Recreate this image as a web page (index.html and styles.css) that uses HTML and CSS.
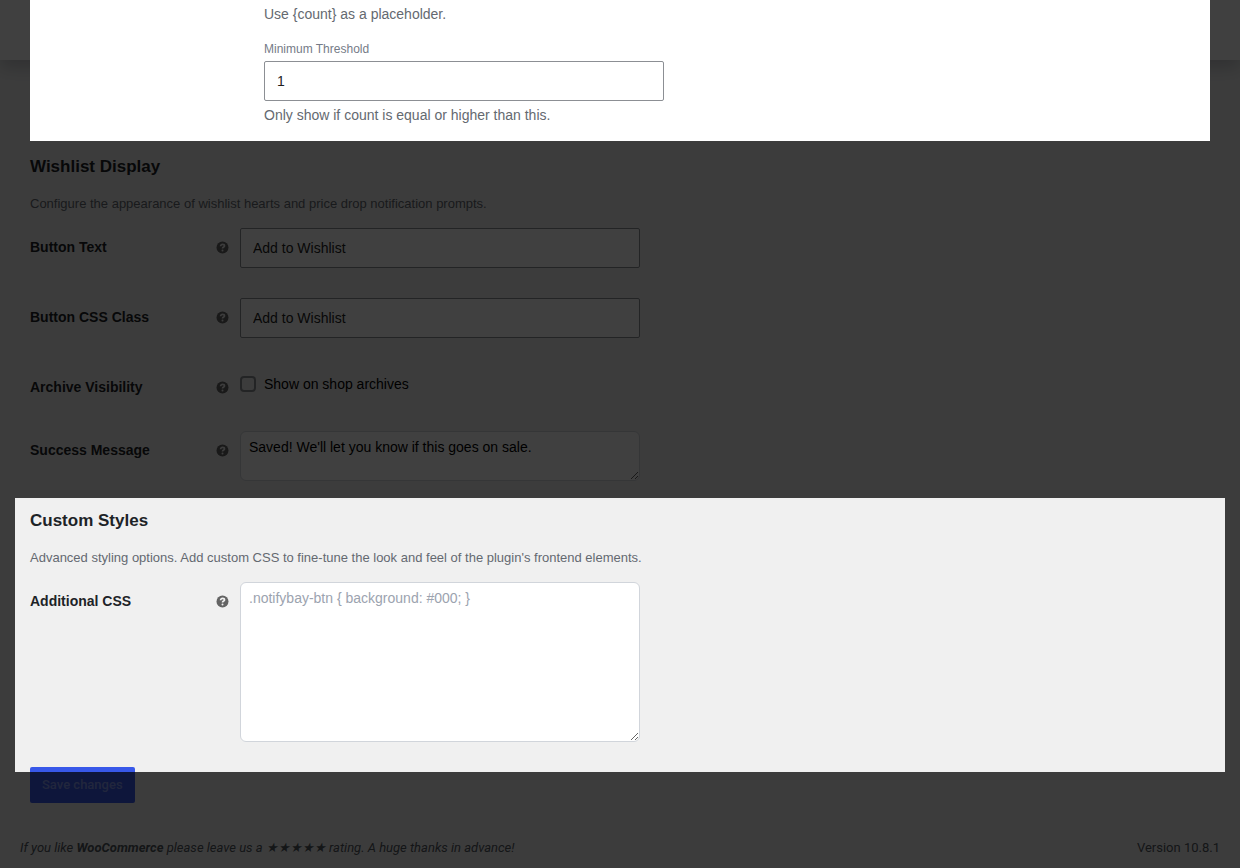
FILE: index.html
```html
<!DOCTYPE html>
<html lang="en">
  <head>
    <meta charset="UTF-8" />
    <meta name="viewport" content="width=device-width, initial-scale=1.0" />
    <title>Settings</title>
    <link rel="stylesheet" href="styles.css">
  </head>
  <body>
    <!-- Help icon, reused in each row -->
    <svg class="symbols" aria-hidden="true">
      <symbol id="help" viewBox="0 0 13 13">
        <circle cx="6.5" cy="6.5" r="6" fill="currentColor" />
        <path class="mark" d="M4.6 5.2C4.6 3.9 5.5 3.4 6.5 3.4S8.5 3.9 8.5 4.9C8.5 6.2 6.5 6 6.5 7.6" />
        <circle class="dot" cx="6.5" cy="9.5" r="1" />
      </symbol>
    </svg>

    <!-- Top bar -->
    <header class="topbar"></header>

    <form class="settings">
      <!-- Highlighted panel -->
      <div class="panel">
        <p>Use {count} as a placeholder.</p>
        <label for="threshold">Minimum Threshold</label>
        <input class="text-input" type="number" id="threshold" value="1">
        <p class="hint">Only show if count is equal or higher than this.</p>
      </div>

      <!-- Wishlist display -->
      <section class="section">
        <h2>Wishlist Display</h2>
        <p class="description">Configure the appearance of wishlist hearts and price drop notification prompts.</p>
        <div class="row">
          <div class="row-label">
            <label for="button-text">Button Text</label>
            <svg class="help"><use href="#help" /></svg>
          </div>
          <div class="row-field">
            <input class="text-input" type="text" id="button-text" value="Add to Wishlist">
          </div>
        </div>
        <div class="row">
          <div class="row-label">
            <label for="button-class">Button CSS Class</label>
            <svg class="help"><use href="#help" /></svg>
          </div>
          <div class="row-field">
            <input class="text-input" type="text" id="button-class" value="Add to Wishlist">
          </div>
        </div>
        <div class="row">
          <div class="row-label">
            <span>Archive Visibility</span>
            <svg class="help"><use href="#help" /></svg>
          </div>
          <div class="row-field">
            <label class="check"><input type="checkbox" id="archives">Show on shop archives</label>
          </div>
        </div>
        <div class="row">
          <div class="row-label">
            <label for="success">Success Message</label>
            <svg class="help"><use href="#help" /></svg>
          </div>
          <div class="row-field">
            <textarea class="message" id="success">Saved! We'll let you know if this goes on sale.</textarea>
          </div>
        </div>
      </section>

      <!-- Custom styles -->
      <section class="section spotlight">
        <h2>Custom Styles</h2>
        <p class="description">Advanced styling options. Add custom CSS to fine-tune the look and feel of the plugin's frontend elements.</p>
        <div class="row">
          <div class="row-label">
            <label for="css">Additional CSS</label>
            <svg class="help"><use href="#help" /></svg>
          </div>
          <div class="row-field">
            <textarea class="code" id="css" placeholder=".notifybay-btn { background: #000; }"></textarea>
          </div>
        </div>
      </section>

      <button class="save" type="submit" disabled>Save changes</button>
    </form>

    <!-- Footer -->
    <footer class="footer">
      <p class="thanks">If you like <strong>WooCommerce</strong> please leave us a <a href="#">★★★★★</a> rating. A huge thanks in advance!</p>
      <p>Version 10.8.1</p>
    </footer>
  </body>
</html>
```
FILE: styles.css
```css
* {
  box-sizing: border-box;
}

body {
  margin: 0;
  background-color: #f0f0f0;
  color: #1d2327;
  font-family: "Liberation Sans", Arial, sans-serif;
  font-size: 14px;
  line-height: 20px;
}

p,
h2 {
  margin: 0;
}

.symbols {
  position: absolute;
  width: 0;
  height: 0;
}

/* Top bar */
.topbar {
  height: 60px;
  background-color: #fff;
  box-shadow: 0 8px 16px 0 rgba(85, 93, 102, 0.3);
}

.settings {
  padding: 0 30px;
}

/* Panel lies over the top bar and the dimmed page */
.panel {
  position: relative;
  z-index: 10;
  margin-top: -60px;
  margin-bottom: 18px;
  padding: 4px 24px 16px 234px;
  background-color: #fff;
  color: #646970;
}

.panel label {
  display: block;
  margin-top: 15px;
  margin-bottom: 2px;
  color: #757b87;
  font-size: 12px;
}

.panel .hint {
  margin-top: 4px;
}

/* Sections */
.section h2 {
  margin-bottom: 19px;
  font-size: 17px;
  line-height: 16px;
}

.description {
  color: #646970;
  font-size: 13px;
  line-height: 19px;
}

.row {
  display: grid;
  grid-template-columns: 210px 1fr;
}

.row-label {
  display: flex;
  align-items: flex-start;
  justify-content: space-between;
  padding: 24px 11px 19px 0;
  font-weight: bold;
}

.row-field {
  padding: 15px 0;
}

/* Help icon */
.help {
  width: 13px;
  height: 13px;
  margin-top: 4px;
  color: #646464;
}

.mark {
  fill: none;
  stroke: #f0f0f0;
  stroke-width: 1.7;
}

.dot {
  fill: #f0f0f0;
}

/* Fields */
.text-input,
textarea {
  display: block;
  width: 100%;
  max-width: 400px;
  margin: 0;
  background-color: #fff;
  color: #1e1e1e;
  font: inherit;
}

.text-input {
  height: 40px;
  padding: 0 12px;
  border: 1px solid #8c8f94;
  border-radius: 2px;
}

textarea {
  padding: 5px 8px;
  border: 1px solid #d1d5db;
  border-radius: 6px;
  color: #000;
}

textarea::placeholder {
  color: #9ca3af;
}

.message {
  height: 50px;
}

.code {
  height: 160px;
}

.check {
  display: flex;
  align-items: center;
  gap: 8px;
  height: 32px;
  color: #000;
}

.check input {
  appearance: none;
  width: 16px;
  height: 16px;
  margin: 0;
  border: 2px solid #8c8f94;
  border-radius: 4px;
}

/* Dims everything around the active section */
.spotlight {
  position: relative;
  margin-top: 17px;
}

.spotlight::after {
  content: "";
  position: absolute;
  inset: -15px;
  z-index: 5;
  box-shadow: 0 0 0 9999px rgba(0, 0, 0, 0.75);
  pointer-events: none;
}

.save {
  display: block;
  height: 36px;
  margin-top: 10px;
  padding: 0 12px 2px;
  border: 0;
  border-radius: 2px;
  background-color: #3858e9;
  color: rgba(255, 255, 255, 0.4);
  font-family: Roboto, sans-serif;
  font-size: 13px;
  font-weight: 500;
}

/* Footer */
.footer {
  display: flex;
  justify-content: space-between;
  padding: 35px 20px 10px;
  color: #50575e;
  font-family: Roboto, sans-serif;
  font-size: 13px;
}

.thanks {
  font-style: italic;
}

.footer a {
  color: inherit;
  text-decoration: none;
}
```
